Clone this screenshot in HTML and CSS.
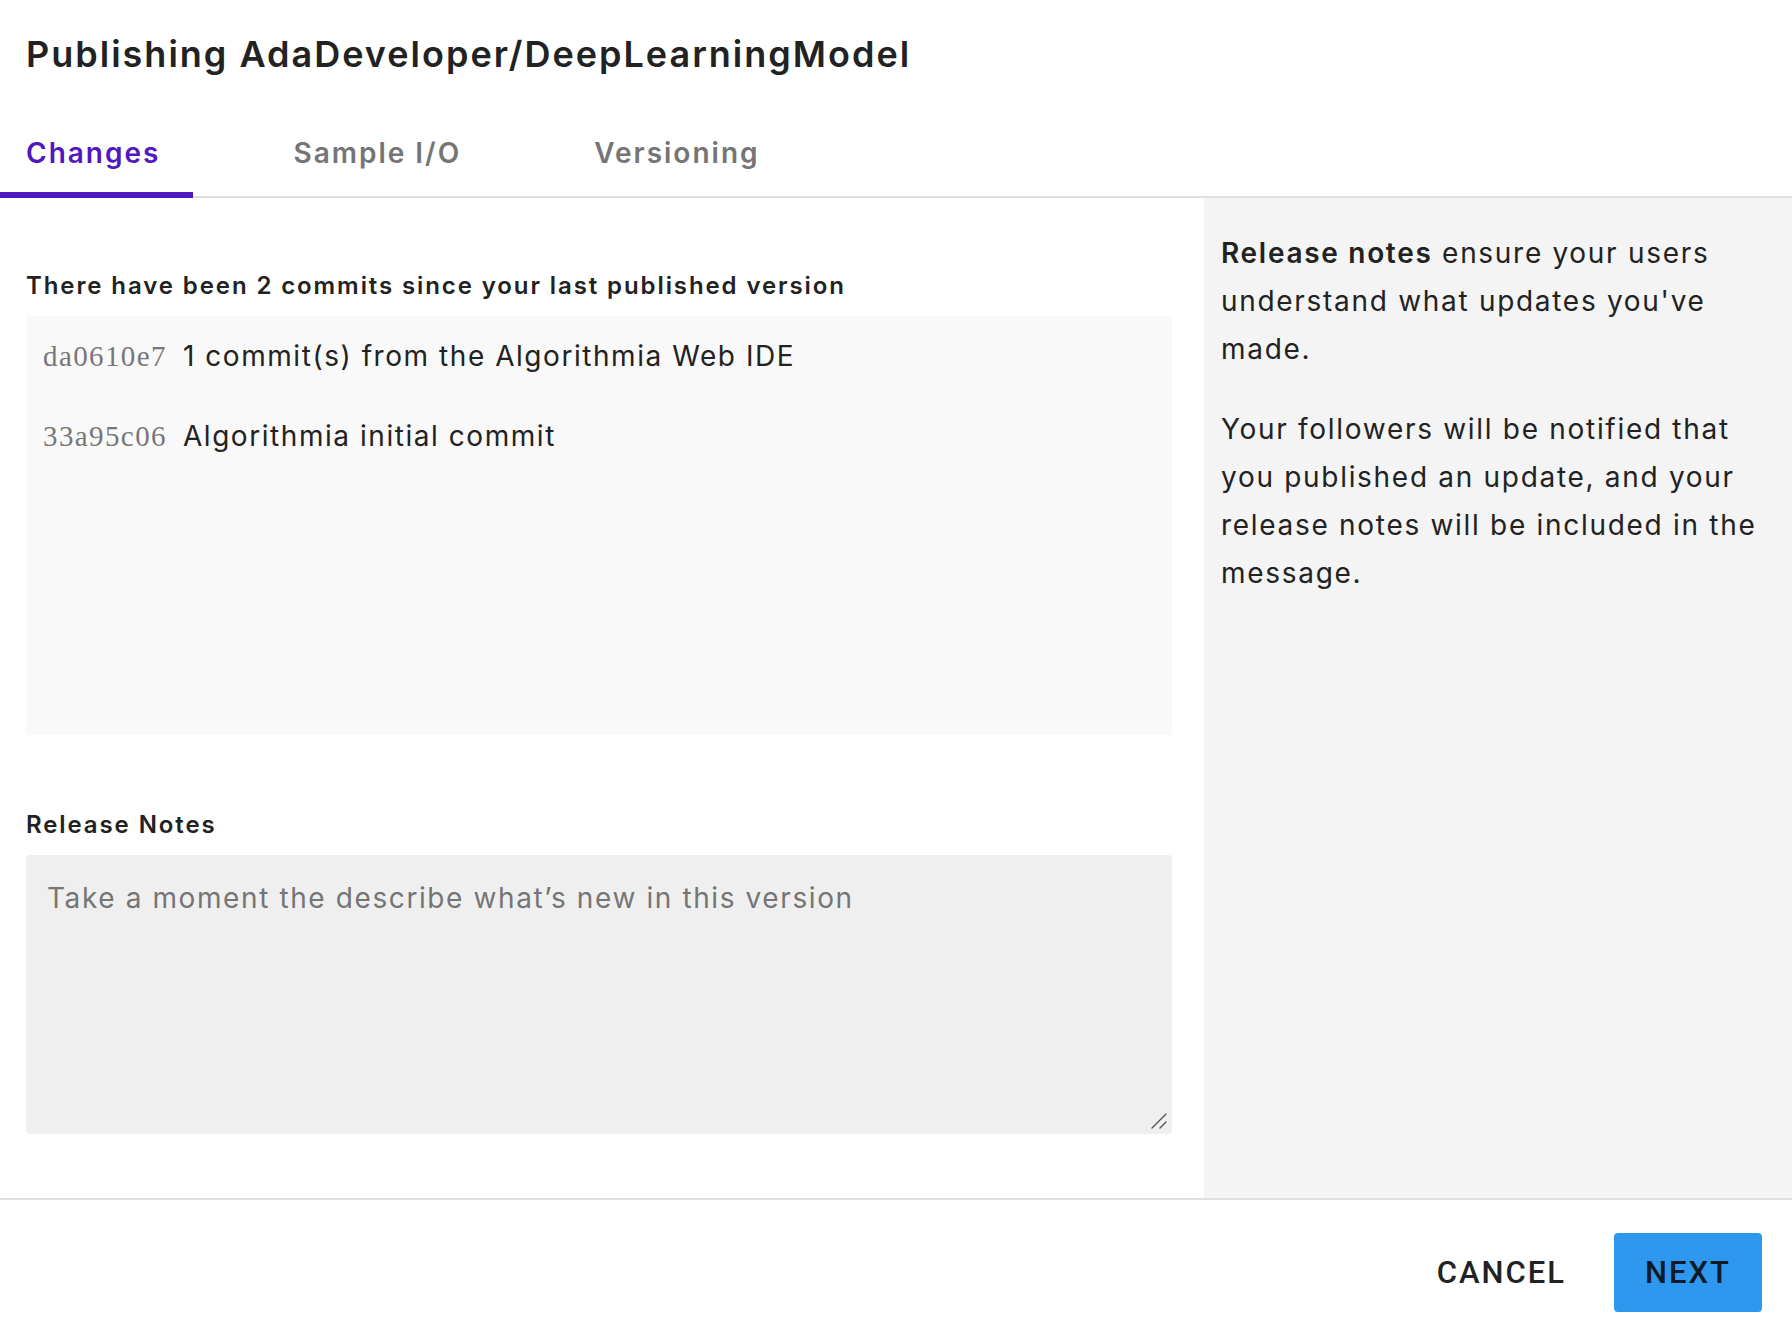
FILE: index.html
```html
<!DOCTYPE html>
<html lang="en">
<head>
<meta charset="utf-8">
<title>Publishing AdaDeveloper/DeepLearningModel</title>
<link rel="stylesheet" href="styles.css">
</head>
<body>
<div class="dialog">
  <header class="header">
    <h1 class="title">Publishing AdaDeveloper/DeepLearningModel</h1>
  </header>
  <nav class="tabs">
    <div class="tab tab-active">Changes</div>
    <div class="tab">Sample I/O</div>
    <div class="tab">Versioning</div>
  </nav>
  <main class="main">
    <section class="left">
      <h2 class="label label-commits">There have been 2 commits since your last published version</h2>
      <div class="commits">
        <div class="commit"><span class="hash">da0610e7</span><span class="msg">1 commit(s) from the Algorithmia Web IDE</span></div>
        <div class="commit"><span class="hash">33a95c06</span><span class="msg">Algorithmia initial commit</span></div>
      </div>
      <h2 class="label label-notes">Release Notes</h2>
      <div class="notes-wrap">
        <textarea class="notes" placeholder="Take a moment the describe what’s new in this version"></textarea>
        <svg class="grip" width="16" height="16" viewBox="0 0 16 16" aria-hidden="true">
          <path d="M1 15 L15 1 M9 15 L15 9" stroke="#555555" stroke-width="1.4" stroke-linecap="round" fill="none"/>
        </svg>
      </div>
    </section>
    <aside class="side">
      <p class="side-p"><strong>Release notes</strong> ensure your users understand what updates you've made.</p>
      <p class="side-p">Your followers will be notified that you published an update, and your release notes will be included in the message.</p>
    </aside>
  </main>
  <footer class="footer">
    <button class="btn btn-text">CANCEL</button>
    <button class="btn btn-primary">NEXT</button>
  </footer>
</div>
</body>
</html>
```

FILE: styles.css
```css
html, body {
  margin: 0;
  padding: 0;
  background: #ffffff;
}

body {
  font-family: Inter, "Noto Sans", sans-serif;
  color: #222222;
}

.dialog {
  width: 1792px;
  height: 1340px;
  display: flex;
  flex-direction: column;
}

.header {
  padding: 32px 26px 0;
}

.title {
  margin: 0;
  font-size: 36px;
  line-height: 44px;
  font-weight: 600;
  letter-spacing: 2px;
  color: #222222;
}

.tabs {
  display: flex;
  gap: 74px;
  margin-top: 24px;
  box-shadow: inset 0 -2px 0 #e0e0e0;
}

.tab {
  padding: 36px 33px 22px 26px;
  line-height: 34px;
  font-size: 28px;
  font-weight: 600;
  letter-spacing: 2px;
  color: #757575;
  border-bottom: 6px solid transparent;
}

.tab-active {
  color: #5118c2;
  border-bottom-color: #5118c2;
}

.main {
  display: flex;
  height: 1000px;
}

.left {
  width: 1146px;
  padding: 73px 32px 0 26px;
  display: flex;
  flex-direction: column;
}

.label {
  margin: 0;
  font-size: 24px;
  line-height: 30px;
  font-weight: 600;
  letter-spacing: 1.9px;
  color: #222222;
}

.commits {
  margin-top: 15px;
  height: 419px;
  background: #f9f9f9;
  padding: 0 17px;
  box-sizing: border-box;
}

.commit {
  display: flex;
  align-items: baseline;
  padding: 20px 0;
  line-height: 40px;
}

.hash {
  font-family: "Liberation Serif", "Times New Roman", serif;
  font-size: 29px;
  letter-spacing: 1.4px;
  color: #777777;
  margin-right: 16px;
}

.msg {
  font-size: 28px;
  letter-spacing: 1.55px;
  color: #222222;
}

.label-notes {
  margin-top: 75px;
}

.notes-wrap {
  position: relative;
  margin-top: 15px;
  height: 279px;
}

.notes {
  display: block;
  width: 100%;
  height: 100%;
  box-sizing: border-box;
  border: none;
  border-radius: 4px;
  background: #efefef;
  padding: 23px 21px;
  font-family: Inter, "Noto Sans", sans-serif;
  font-size: 28px;
  line-height: 40px;
  letter-spacing: 1.6px;
  color: #222222;
  outline: none;
  resize: none;
}

.notes::placeholder {
  color: #757575;
}

.grip {
  position: absolute;
  right: 5px;
  bottom: 5px;
  pointer-events: none;
}

.side {
  flex: 1;
  background: #f4f4f4;
  padding: 31px 24px 0 17px;
}

.side-p {
  margin: 0 0 32px;
  font-size: 28px;
  line-height: 48px;
  letter-spacing: 1.7px;
  color: #222222;
}

.side-p strong {
  font-weight: 600;
}

.footer {
  border-top: 2px solid #e0e0e0;
  flex: 1;
  display: flex;
  justify-content: flex-end;
  align-items: flex-start;
  padding: 33px 30px 0;
  gap: 17px;
}

.btn {
  height: 79px;
  padding: 0 31px;
  border: none;
  border-radius: 4px;
  font-family: Roboto, "Liberation Sans", sans-serif;
  font-size: 31px;
  font-weight: 500;
  letter-spacing: 2px;
  cursor: pointer;
}

.btn-text {
  background: transparent;
  color: #222222;
}

.btn-primary {
  background: #2e98ee;
  color: #0e1a28;
}
```
